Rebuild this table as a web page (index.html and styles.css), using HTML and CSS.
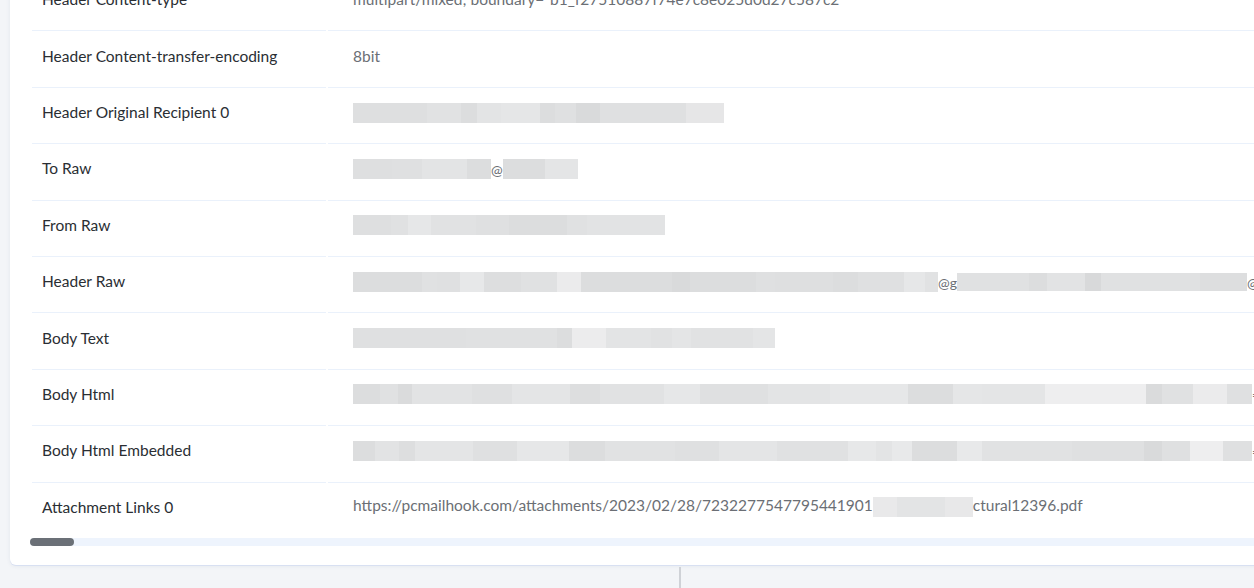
FILE: index.html
```html
<!DOCTYPE html>
<html>
<head>
<meta charset="utf-8">
<link rel="stylesheet" href="styles.css">
</head>
<body>
<div class="page">
  <div class="card">
    <div class="scroller">
      <table class="details">
        <tr>
          <td class="label">Header Content-type</td>
          <td class="value">multipart/mixed; boundary="b1_f27510887f74e7c8e025d0d27c587c2"</td>
        </tr>
        <tr>
          <td class="label">Header Content-transfer-encoding</td>
          <td class="value">8bit</td>
        </tr>
        <tr>
          <td class="label">Header Original Recipient 0</td>
          <td class="value"><span class="redact"><i style="width:74px;background:#dedfe0"></i><i style="width:34px;background:#e1e2e3"></i><i style="width:16px;background:#dcddde"></i><i style="width:24px;background:#e3e4e5"></i><i style="width:39px;background:#e5e6e7"></i><i style="width:15px;background:#dcddde"></i><i style="width:21px;background:#dfe0e1"></i><i style="width:24px;background:#d9dadb"></i><i style="width:86px;background:#dfe0e1"></i><i style="width:38px;background:#e6e6e7"></i></span></td>
        </tr>
        <tr>
          <td class="label">To Raw</td>
          <td class="value"><span class="redact"><i style="width:39px;background:#dedfe0"></i><i style="width:30px;background:#dfe0e1"></i><i style="width:45px;background:#e3e4e5"></i><i style="width:24px;background:#dcddde"></i></span><span class="at">@</span><span class="redact"><i style="width:42px;background:#dcddde"></i><i style="width:33px;background:#e4e5e6"></i></span></td>
        </tr>
        <tr>
          <td class="label">From Raw</td>
          <td class="value"><span class="redact"><i style="width:38px;background:#dedfe0"></i><i style="width:17px;background:#e0e1e2"></i><i style="width:23px;background:#e6e7e8"></i><i style="width:45px;background:#e1e2e3"></i><i style="width:33px;background:#dfe0e1"></i><i style="width:58px;background:#dcddde"></i><i style="width:20px;background:#e0e1e2"></i><i style="width:78px;background:#e2e3e4"></i></span></td>
        </tr>
        <tr>
          <td class="label">Header Raw</td>
          <td class="value"><span class="redact"><i style="width:69px;background:#dcddde"></i><i style="width:15px;background:#e0e1e2"></i><i style="width:23px;background:#dfe0e1"></i><i style="width:24px;background:#e7e8e9"></i><i style="width:37px;background:#dddedf"></i><i style="width:36px;background:#e0e1e2"></i><i style="width:24px;background:#ebebec"></i><i style="width:91px;background:#dcddde"></i><i style="width:18px;background:#d9dadb"></i><i style="width:66px;background:#dcddde"></i><i style="width:19px;background:#dfe0e1"></i><i style="width:58px;background:#dedfe0"></i><i style="width:25px;background:#dcddde"></i><i style="width:46px;background:#dfe0e1"></i><i style="width:21px;background:#e6e7e8"></i><i style="width:13px;background:#e1e2e3"></i></span><span class="at">@g</span><span class="redact short"><i style="width:72px;background:#e0e1e2"></i><i style="width:18px;background:#dcddde"></i><i style="width:38px;background:#e2e3e4"></i><i style="width:16px;background:#d8d9da"></i><i style="width:99px;background:#e0e1e2"></i><i style="width:47px;background:#dddedf"></i></span><span class="at">@</span></td>
        </tr>
        <tr>
          <td class="label">Body Text</td>
          <td class="value"><span class="redact"><i style="width:113px;background:#dfe0e1"></i><i style="width:91px;background:#e0e1e2"></i><i style="width:15px;background:#dcddde"></i><i style="width:34px;background:#ececed"></i><i style="width:45px;background:#e3e4e5"></i><i style="width:21px;background:#e1e2e3"></i><i style="width:19px;background:#e4e5e6"></i><i style="width:62px;background:#e1e2e3"></i><i style="width:22px;background:#e4e5e6"></i></span></td>
        </tr>
        <tr>
          <td class="label">Body Html</td>
          <td class="value"><span class="redact"><i style="width:27px;background:#dcddde"></i><i style="width:18px;background:#e0e1e2"></i><i style="width:14px;background:#dadbdc"></i><i style="width:60px;background:#e2e3e4"></i><i style="width:40px;background:#dfe0e1"></i><i style="width:58px;background:#e4e5e6"></i><i style="width:30px;background:#dddedf"></i><i style="width:64px;background:#e1e2e3"></i><i style="width:36px;background:#e6e7e8"></i><i style="width:68px;background:#dfe0e1"></i><i style="width:62px;background:#e3e4e5"></i><i style="width:78px;background:#e6e7e8"></i><i style="width:45px;background:#dcddde"></i><i style="width:29px;background:#e5e6e7"></i><i style="width:63px;background:#e4e5e6"></i><i style="width:101px;background:#eeeeef"></i><i style="width:16px;background:#dadbdc"></i><i style="width:31px;background:#e0e1e2"></i><i style="width:34px;background:#ebebec"></i><i style="width:25px;background:#dfe0e1"></i></span><span class="at">=</span></td>
        </tr>
        <tr>
          <td class="label">Body Html Embedded</td>
          <td class="value"><span class="redact"><i style="width:22px;background:#dcddde"></i><i style="width:24px;background:#e2e3e4"></i><i style="width:16px;background:#dddedf"></i><i style="width:58px;background:#e4e5e6"></i><i style="width:44px;background:#dfe0e1"></i><i style="width:52px;background:#e6e7e8"></i><i style="width:36px;background:#dcddde"></i><i style="width:70px;background:#e1e2e3"></i><i style="width:44px;background:#dfe0e1"></i><i style="width:58px;background:#e4e5e6"></i><i style="width:53px;background:#e0e1e2"></i><i style="width:18px;background:#e0e1e2"></i><i style="width:28px;background:#e7e8e9"></i><i style="width:16px;background:#e3e4e5"></i><i style="width:20px;background:#e8e9ea"></i><i style="width:45px;background:#dcddde"></i><i style="width:25px;background:#e8e9ea"></i><i style="width:90px;background:#e1e2e3"></i><i style="width:72px;background:#dfe0e1"></i><i style="width:18px;background:#d9dadb"></i><i style="width:28px;background:#dfe0e1"></i><i style="width:33px;background:#eeeeef"></i><i style="width:29px;background:#dfe0e1"></i></span><span class="at">=</span></td>
        </tr>
        <tr class="last">
          <td class="label">Attachment Links 0</td>
          <td class="value">https://pcmailhook.com/attachments/2023/02/28/7232277547795441901<span class="redact"><i style="width:24px;background:#e9e9ea"></i><i style="width:48px;background:#e3e4e5"></i><i style="width:28px;background:#e8e8e9"></i></span>ctural12396.pdf</td>
        </tr>
      </table>
      <div class="scrollbar"><div class="thumb"></div></div>
    </div>
  </div>
  <div class="below">
    <div class="below-left"></div>
    <div class="below-right"></div>
  </div>
</div>
</body>
</html>
```

FILE: styles.css
```css
html, body {
  margin: 0;
  padding: 0;
  height: 100%;
  overflow: hidden;
  background: #f3f5f8;
}
body {
  font-family: Lato, "Open Sans", "Liberation Sans", sans-serif;
}
.page {
  padding-left: 10px;
  width: 1500px;
}
.card {
  margin-top: -45px;
  width: 1400px;
  background: #ffffff;
  border-radius: 6px;
  padding: 20px 20px 19px 20px;
  box-shadow: 0 1px 0 #d8e0f2, 0 1px 4px rgba(40, 60, 120, 0.08);
}
.scroller {
  overflow: hidden;
}
.details {
  border-collapse: separate;
  border-spacing: 2px 0;
  margin-left: 0;
  white-space: nowrap;
}
.details td {
  box-sizing: border-box;
  height: 56.4px;
  padding: 0 0 7px 0;
  border-bottom: 1px solid #eaf1fb;
  font-size: 15.5px;
  vertical-align: middle;
}
.details tr.last td {
  border-bottom: none;
  height: 55.4px;
}
.label {
  width: 294px;
  min-width: 294px;
  padding-left: 10px !important;
  color: #2a2e33;
}
.value {
  padding-left: 25px !important;
  color: #6b6f75;
  width: 1100px;
}
.redact {
  display: inline-flex;
  vertical-align: middle;
  height: 20px;
}
.redact i {
  display: block;
  height: 100%;
}
.redact.short {
  height: 18px;
}
.at {
  vertical-align: middle;
  font-size: 14px;
  color: #6b6f75;
}
.scrollbar {
  height: 8px;
  background: #eef4fd;
  border-radius: 4px;
}
.thumb {
  width: 44px;
  height: 8px;
  border-radius: 4px;
  background: #6b7077;
}
.below {
  display: flex;
  margin-top: 2px;
  height: 40px;
  margin-left: -10px;
}
.below-left {
  width: 679px;
  border-right: 2px solid #cfd2d7;
}
.below-right {
  flex: 1;
}
```
